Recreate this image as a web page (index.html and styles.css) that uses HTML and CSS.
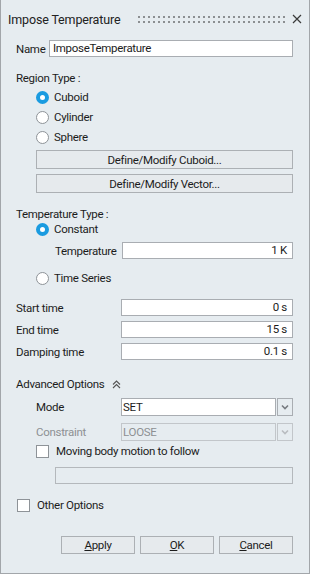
FILE: index.html
```html
<!DOCTYPE html>
<html>
<head>
<meta charset="utf-8">
<link rel="stylesheet" href="styles.css">
</head>
<body>
<div class="window">
  <div class="titlebar">
    <span class="title">Impose Temperature</span>
    <svg class="grip" width="148" height="7" viewBox="0 0 148 7">
      <defs><pattern id="dp" width="5" height="5" patternUnits="userSpaceOnUse"><rect width="2" height="2" fill="#8c8f92"/></pattern></defs>
      <rect width="148" height="7" fill="url(#dp)"/>
    </svg>
    <svg class="close" width="10" height="10" viewBox="0 0 10 10">
      <path d="M1 1 L9 9 M9 1 L1 9" stroke="#3a3a3a" stroke-width="1.2" fill="none"/>
    </svg>
  </div>

  <div class="content">
    <div class="row name-row">
      <span class="lbl name-lbl">Name</span>
      <div class="input name-input">ImposeTemperature</div>
    </div>

    <div class="section-lbl region-lbl">Region Type :</div>
    <div class="radios">
      <div class="radio-row"><span class="radio checked"></span><span>Cuboid</span></div>
      <div class="radio-row"><span class="radio"></span><span>Cylinder</span></div>
      <div class="radio-row"><span class="radio"></span><span>Sphere</span></div>
    </div>
    <div class="btn wide first">Define/Modify Cuboid...</div>
    <div class="btn wide second">Define/Modify Vector...</div>

    <div class="section-lbl temp-lbl">Temperature Type :</div>
    <div class="radio-row indent"><span class="radio checked"></span><span>Constant</span></div>
    <div class="row temp-row">
      <span class="lbl temp-val-lbl">Temperature</span>
      <div class="input num">1 K</div>
    </div>
    <div class="radio-row indent ts-row"><span class="radio"></span><span>Time Series</span></div>

    <div class="times">
      <div class="row"><span class="lbl time-lbl">Start time</span><div class="input num">0 s</div></div>
      <div class="row"><span class="lbl time-lbl">End time</span><div class="input num">15 s</div></div>
      <div class="row"><span class="lbl time-lbl">Damping time</span><div class="input num">0.1 s</div></div>
    </div>

    <div class="adv">
      <span>Advanced Options</span>
      <svg width="9" height="9" viewBox="0 0 9 9">
        <path d="M1 4.5 L4.5 1 L8 4.5 M1 8 L4.5 4.5 L8 8" stroke="#555" stroke-width="1.1" fill="none"/>
      </svg>
    </div>

    <div class="adv-body">
      <div class="row sel-row">
        <span class="lbl adv-lbl">Mode</span>
        <div class="select"><div class="sel-text">SET</div><div class="sel-btn"><svg width="8" height="6" viewBox="0 0 8 6"><path d="M1 1.5 L4 4.5 L7 1.5" stroke-width="1.6" fill="none" class="chev"/></svg></div></div>
      </div>
      <div class="row sel-row disabled">
        <span class="lbl adv-lbl">Constraint</span>
        <div class="select"><div class="sel-text">LOOSE</div><div class="sel-btn"><svg width="8" height="6" viewBox="0 0 8 6"><path d="M1 1.5 L4 4.5 L7 1.5" stroke-width="1.6" fill="none" class="chev"/></svg></div></div>
      </div>
      <div class="check-row moving"><span class="check"></span><span>Moving body motion to follow</span></div>
      <div class="input empty-input"></div>
    </div>

    <div class="check-row other"><span class="check"></span><span>Other Options</span></div>

    <div class="footer">
      <div class="btn foot"><span class="u">A</span>pply</div>
      <div class="btn foot"><span class="u">O</span>K</div>
      <div class="btn foot"><span class="u">C</span>ancel</div>
    </div>
  </div>
</div>
</body>
</html>
```

FILE: styles.css
```css
html, body {
  margin: 0;
  padding: 0;
  background: #e6ecf0;
}
.window {
  width: 310px;
  height: 574px;
  box-sizing: border-box;
  border: 1px solid #a2a6aa;
  border-top: none;
  background: #e6ecf0;
  font-family: Roboto, "Liberation Sans", sans-serif;
  font-size: 11.5px;
  letter-spacing: -0.3px;
  color: #1c1c1c;
  display: flex;
  flex-direction: column;
}
.titlebar {
  height: 38px;
  display: flex;
  align-items: center;
  padding-left: 7px;
  flex-shrink: 0;
}
.title {
  font-size: 12.5px;
  letter-spacing: -0.15px;
  color: #222;
  width: 114px;
  white-space: nowrap;
}
.grip {
  margin-left: 16px;
  margin-top: 1px;
}
.close {
  margin-left: 6px;
}
.content {
  flex: 1;
  display: flex;
  flex-direction: column;
  padding: 2px 16px 19px 15px;
}
.row {
  display: flex;
  align-items: center;
  height: 17px;
}
.lbl {
  flex-shrink: 0;
  white-space: nowrap;
}
.name-lbl { width: 33px; }
.input {
  flex: 1;
  height: 17px;
  box-sizing: border-box;
  background: #fff;
  border: 1px solid #a9adb2;
  padding: 0 3px;
  line-height: 15px;
  white-space: nowrap;
}
.input.num {
  text-align: right;
  padding-right: 5px;
}
.section-lbl {
  line-height: 13px;
  height: 13px;
}
.region-lbl { margin-top: 15px; }
.radios {
  display: flex;
  flex-direction: column;
  gap: 4px;
  margin-top: 4px;
}
.radio-row {
  display: flex;
  align-items: center;
  height: 16px;
  padding-left: 20px;
  gap: 5px;
}
.radio {
  width: 13px;
  height: 13px;
  box-sizing: border-box;
  border-radius: 50%;
  background: #fff;
  border: 1px solid #8e9398;
  flex-shrink: 0;
}
.radio.checked {
  background: #fff;
  border: 4px solid #1a9be0;
}
.btn {
  box-sizing: border-box;
  border: 1px solid #acb0b4;
  background: #e6eaed;
  display: flex;
  align-items: center;
  justify-content: center;
}
.btn.wide {
  margin-left: 20px;
  height: 19px;
}
.btn.first { margin-top: 5px; }
.btn.second { margin-top: 5px; }
.temp-lbl { margin-top: 15px; }
.temp-row {
  margin-top: 5px;
  padding-left: 39px;
}
.temp-val-lbl { width: 67px; }
.ts-row { margin-top: 11px; }
.times {
  display: flex;
  flex-direction: column;
  gap: 5px;
  margin-top: 13px;
}
.time-lbl { width: 105px; }
.adv {
  display: flex;
  align-items: center;
  gap: 7px;
  height: 14px;
  margin-top: 17px;
}
.adv svg { margin-top: 1px; }
.adv-body {
  display: flex;
  flex-direction: column;
  padding-left: 20px;
}
.sel-row {
  height: 18px;
  margin-top: 7px;
}
.adv-lbl { width: 85px; }
.select {
  flex: 1;
  display: flex;
  height: 18px;
  gap: 1px;
}
.sel-text {
  flex: 1;
  background: #fff;
  border: 1px solid #a9adb2;
  box-sizing: border-box;
  padding-left: 1px;
  line-height: 16px;
}
.sel-btn {
  width: 16px;
  box-sizing: border-box;
  border: 1px solid #a9adb2;
  display: flex;
  align-items: center;
  justify-content: center;
}
.chev { stroke: #777b80; }
.disabled { color: #8d9093; }
.disabled .sel-text {
  background: #e6ecf0;
  border-color: #c2c6ca;
}
.disabled .sel-btn { border-color: #c2c6ca; }
.disabled .chev { stroke: #b9bcc0; }
.check-row {
  display: flex;
  align-items: center;
  gap: 7px;
  height: 14px;
}
.check {
  width: 13px;
  height: 13px;
  box-sizing: border-box;
  background: #fff;
  border: 1px solid #8e9398;
  flex-shrink: 0;
}
.moving { margin-top: 3px; }
.empty-input {
  flex: none;
  margin-top: 9px;
  margin-left: 19px;
  height: 17px;
  background: #e6ecf0;
  border-color: #b4b8bc;
}
.other {
  margin-top: 14px;
  padding-left: 1px;
}
.footer {
  margin-top: auto;
  display: flex;
  justify-content: flex-end;
  gap: 5px;
}
.btn.foot {
  width: 74px;
  height: 18px;
}
.u { text-decoration: underline; }
```
